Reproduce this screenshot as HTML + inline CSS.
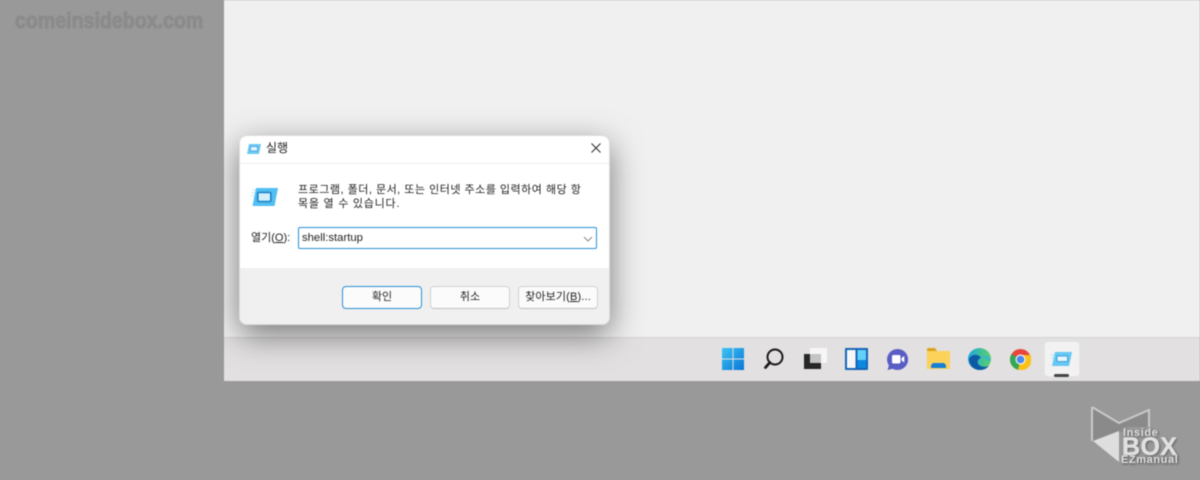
<!DOCTYPE html>
<html><head><meta charset="utf-8">
<style>
html,body{margin:0;padding:0}
body{width:1200px;height:480px;position:relative;overflow:hidden;background:#999}
#w{left:0;top:0;width:1200px;height:480px;filter:blur(.4px);font-family:"Liberation Sans","Noto Sans CJK KR",sans-serif;color:#222}
div,span,svg{position:absolute;box-sizing:border-box}
.t{white-space:nowrap;font-size:11px;line-height:14px;color:#222}
.btn{border:1px solid #d2d2d2;border-bottom-color:#c0c0c0;border-radius:4px;background:#fbfbfb;text-align:center;font-size:11px;line-height:20px;height:23px;top:286px;color:#222;white-space:nowrap}
u{text-decoration:underline}
</style></head><body><div id="w">
<div style="left:224px;top:0;width:976px;height:381px;overflow:hidden;background:#f0f0f0">
  <div style="left:0;top:337px;width:976px;height:44px;background:#e2e0e0;border-top:1px solid #d4d4d4"></div>
  <div style="left:15px;top:135px;width:371px;height:190px;border-radius:8px;box-shadow:0 10px 32px rgba(0,0,0,.5)"></div>
</div>
<div style="left:15px;top:8px;font:bold 22px/26px 'Liberation Sans',sans-serif;color:#8b8b8b;transform-origin:0 0;transform:scaleX(.89);white-space:nowrap;-webkit-text-stroke:1px #8b8b8b">comeinsidebox.com</div>

<!-- dialog -->
<div style="left:239px;top:135px;width:371px;height:190px;border-radius:8px;background:#fff;overflow:hidden;border:1px solid #dcdcdc">
  <div style="left:0;top:27px;width:100%;height:1px;background:#eeeeee"></div>
  <div style="left:0;top:132px;width:100%;height:57px;background:#f0f0f0"></div>
</div>
<svg style="left:247px;top:144px" width="14" height="10" viewBox="0 0 14 10"><path d="M2 0h12l-2 10H0z" fill="#6cc9f4"/><rect x="3.500" y="2.500" width="7" height="4.500" fill="#dff3fc" stroke="#4aa6dd" stroke-width=".9"/></svg>
<div class="t" style="left:266px;top:140px;font-size:12px;line-height:16px">실행</div>
<svg style="left:591px;top:143px" width="10" height="10" viewBox="0 0 10 10"><path d="M.5.5l9 9M9.500.5l-9 9" stroke="#333" stroke-width="1.100" fill="none"/></svg>

<svg style="left:251px;top:188px" width="28" height="19" viewBox="0 0 28 19"><path d="M5 0h22l-3.500 18H1.500z" fill="#52bff1"/><path d="M1 2h4M0 5h4M0 8h3" stroke="#c5e9f9" stroke-width="1"/><rect x="6.800" y="4.500" width="13" height="9" rx="1" fill="#d5effb" stroke="#1a80c6" stroke-width="1.600"/></svg>
<div class="t" style="left:298px;top:183px;letter-spacing:.5px">프로그램, 폴더, 문서, 또는 인터넷 주소를 입력하여 해당 항</div>
<div class="t" style="left:298px;top:197px;letter-spacing:.75px">목을 열 수 있습니다.</div>

<div class="t" style="left:251px;top:231px">열기(<u>O</u>):</div>
<div style="left:298px;top:227px;width:299px;height:22px;border:1px solid #2b8fd6;border-radius:2px;background:#fff"></div>
<div class="t" style="left:302px;top:231px;font-size:11.300px">shell:startup</div>
<svg style="left:583px;top:236px" width="10" height="6" viewBox="0 0 10 6"><path d="M1 1l4 4 4-4" stroke="#8a8a8a" stroke-width="1" fill="none"/></svg>

<div class="btn" style="left:342px;width:80px;border:1px solid #2b8fd6">확인</div>
<div class="btn" style="left:430px;width:80px">취소</div>
<div class="btn" style="left:518px;width:80px;letter-spacing:.15px">찾아보기(<u>B</u>)...</div>

<!-- taskbar icons -->
<svg style="left:722px;top:348px" width="22" height="22" viewBox="0 0 22 22"><defs><linearGradient id="g" x1="0" y1="0" x2="1" y2="1"><stop offset="0" stop-color="#3cc4f5"/><stop offset="1" stop-color="#0a75d6"/></linearGradient></defs><path d="M0 0h10.500v10.500H0zM11.500 0H22v10.500H11.500zM0 11.500h10.500V22H0zM11.500 11.500H22V22H11.500z" fill="url(#g)"/></svg>
<svg style="left:763px;top:347px" width="22" height="23" viewBox="0 0 22 23"><circle cx="12" cy="10" r="7.500" fill="none" stroke="#1a1a1a" stroke-width="2"/><path d="M6.800 15.500L2.500 20.500" stroke="#1a1a1a" stroke-width="2.800" stroke-linecap="round"/></svg>
<svg style="left:804px;top:348px" width="24" height="22" viewBox="0 0 24 22"><path d="M0 6h17v15H0z" fill="#262626"/><path d="M6 0h17v15H6z" fill="#f6f6f6"/><path d="M6 6h11v9H6z" fill="#c4c4c4"/></svg>
<svg style="left:845px;top:348px" width="23" height="22" viewBox="0 0 23 22"><rect width="23" height="22" rx="1" fill="#1565b8"/><rect x="2" y="2" width="8.500" height="18" fill="#f6f6f6"/><rect x="12.500" y="2" width="8.500" height="10" fill="#62d0fb"/><rect x="12.500" y="12" width="8.500" height="8" fill="#0d8ae0"/></svg>
<svg style="left:886px;top:348px" width="23" height="23" viewBox="0 0 23 23"><path d="M11.500 1a10.500 10.500 0 1 1-5 19.700L1.500 22l1.400-4.500A10.500 10.500 0 0 1 11.500 1z" fill="#5a5dc4"/><rect x="6" y="7" width="8.500" height="8.500" rx="1.500" fill="#fff"/><path d="M15.500 10l2.800-2v6.500l-2.800-2z" fill="#fff"/></svg>
<svg style="left:927px;top:348px" width="23" height="21" viewBox="0 0 23 21"><path d="M0 1.500A1.500 1.500 0 0 1 1.500 0H8l2 3H0z" fill="#d9a21c"/><path d="M0 3h23v18H0z" fill="#fcd25a"/><path d="M6 15h11l2 2v3H4v-3z" fill="#1580d8"/></svg>
<svg style="left:968px;top:348px" width="23" height="22" viewBox="0 0 22 22" preserveAspectRatio="none"><defs><linearGradient id="e" x1="0" y1="0" x2="1" y2="0"><stop offset="0" stop-color="#1ea7e0"/><stop offset="1" stop-color="#5bd266"/></linearGradient></defs><circle cx="11" cy="11" r="11" fill="url(#e)"/><path d="M1 11c0 7 5 11 10.500 11 3.500 0 6.500-1.500 8.500-4-3 1.500-8 1-10-1.500-2-3 0-6 2.500-6.500C10 5.500 3 6 1 11z" fill="#0c59a4"/><path d="M10 16.500c-1.500-3.500 1-6.500 4-6.500 2 0 3.500 1 3.500 3h4c0-1 .3-3-1.500-5-3-1-9 0-10 8.500z" fill="#34b8cf" opacity=".8"/></svg>
<svg style="left:1010px;top:349px" width="21" height="21" viewBox="0 0 21 21"><circle cx="10.500" cy="10.500" r="10.500" fill="#e8453c"/><path d="M10.500 10.500L1.500 5A10.500 10.500 0 0 0 8 20.700z" fill="#34a853"/><path d="M10.500 6H20.500A10.500 10.500 0 0 1 8 20.700L10.500 10.500z" fill="#fbc116"/><circle cx="10.500" cy="10.500" r="5" fill="#fff"/><circle cx="10.500" cy="10.500" r="3.900" fill="#4a8af0"/></svg>
<div style="left:1044px;top:341px;width:36px;height:36px;background:#f3f2f2;border:1px solid #e6e5e5;border-radius:4px"></div>
<svg style="left:1051px;top:352px" width="22" height="14" viewBox="0 0 22 14"><path d="M4 0h17l-3 14H1z" fill="#66c8f4"/><rect x="6" y="4" width="10.500" height="5.500" fill="#e6f6fd" stroke="#3a9ad8" stroke-width=".9"/><path d="M0 3h3M0 6h2" stroke="#a9dff6"/></svg>
<div style="left:1054px;top:374px;width:15px;height:2.500px;border-radius:2px;background:#444"></div>

<!-- watermark -->
<svg style="left:1085px;top:400px" width="100" height="70" viewBox="0 0 100 70"><path d="M7 7L34 23 64 10V27H38V31L8 41z" fill="#8a8a8a"/><path d="M7 7L34 23 64 10V27M7 7V41" fill="none" stroke="#c9c9c9" stroke-width="2"/><path d="M8 41L34 31V62z" fill="#dedede"/></svg>
<div style="left:1123px;top:427px;font:bold 11px/13px 'Liberation Sans',sans-serif;color:#e0e0e0;letter-spacing:.6px;white-space:nowrap;text-shadow:1px 1px 2px #555">Inside</div>
<div style="left:1122px;top:434px;font:bold 25px/27px 'Liberation Sans',sans-serif;color:#e0e0e0;letter-spacing:.4px;white-space:nowrap;text-shadow:1px 1px 2px #555;-webkit-text-stroke:.5px #e0e0e0">BOX</div>
<div style="left:1121px;top:454px;font:bold 11px/12px 'Liberation Sans',sans-serif;color:#e0e0e0;letter-spacing:.6px;white-space:nowrap;text-shadow:1px 1px 2px #444">EZmanual</div>
</div></body></html>
